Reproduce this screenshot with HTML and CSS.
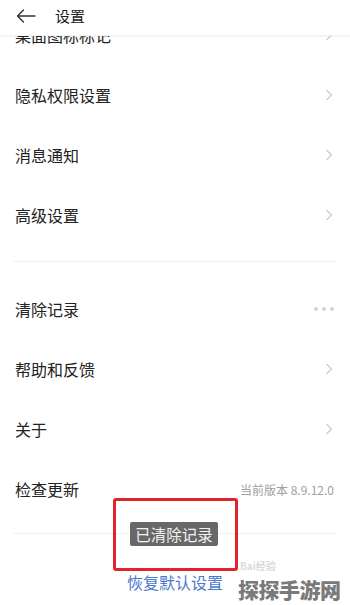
FILE: index.html
```html
<!DOCTYPE html>
<html lang="zh-CN">
<head>
<meta charset="utf-8">
<title>设置</title>
<link rel="stylesheet" href="styles.css">
</head>
<body>
<div class="screen">
  <header class="topbar">
    <svg class="back" width="20" height="14" viewBox="0 0 20 14"><path d="M19 7H1.5M7.5 1L1.5 7l6 6" fill="none" stroke="#333" stroke-width="1.4" stroke-linecap="round" stroke-linejoin="round"/></svg>
    <span class="title">设置</span>
  </header>
  <main class="content">
    <section class="group first">
      <div class="row"><span class="label">桌面图标标记</span><svg class="chev" width="8" height="12" viewBox="0 0 8 12"><path d="M1.5 1l5 5-5 5" fill="none" stroke="#c9c9c9" stroke-width="1.1"/></svg></div>
      <div class="row"><span class="label">隐私权限设置</span><svg class="chev" width="8" height="12" viewBox="0 0 8 12"><path d="M1.5 1l5 5-5 5" fill="none" stroke="#c9c9c9" stroke-width="1.1"/></svg></div>
      <div class="row"><span class="label">消息通知</span><svg class="chev" width="8" height="12" viewBox="0 0 8 12"><path d="M1.5 1l5 5-5 5" fill="none" stroke="#c9c9c9" stroke-width="1.1"/></svg></div>
      <div class="row"><span class="label">高级设置</span><svg class="chev" width="8" height="12" viewBox="0 0 8 12"><path d="M1.5 1l5 5-5 5" fill="none" stroke="#c9c9c9" stroke-width="1.1"/></svg></div>
    </section>
    <div class="divider"></div>
    <section class="group second">
      <div class="row"><span class="label">清除记录</span><span class="dots"><i></i><i></i><i></i></span></div>
      <div class="row"><span class="label">帮助和反馈</span><svg class="chev" width="8" height="12" viewBox="0 0 8 12"><path d="M1.5 1l5 5-5 5" fill="none" stroke="#c9c9c9" stroke-width="1.1"/></svg></div>
      <div class="row"><span class="label">关于</span><svg class="chev" width="8" height="12" viewBox="0 0 8 12"><path d="M1.5 1l5 5-5 5" fill="none" stroke="#c9c9c9" stroke-width="1.1"/></svg></div>
      <div class="row"><span class="label">检查更新</span><span class="version">当前版本 8.9.12.0</span></div>
    </section>
    <div class="divider"></div>
    <div class="reset">恢复默认设置</div>
  </main>
  <div class="toast">已清除记录</div>
  <div class="mark"></div>
  <div class="watermark"><span class="wm-small">Bai经验</span><span class="wm-big">探探手游网</span></div>
</div>
</body>
</html>
```
FILE: styles.css
```css
* { box-sizing: border-box; }
html, body { margin: 0; padding: 0; background: #fff; }
body {
  font-family: "Noto Sans CJK SC", "Noto Sans", sans-serif;
  color: #222;
}
.screen {
  position: relative;
  width: 350px;
  height: 605px;
  overflow: hidden;
  display: flex;
  flex-direction: column;
}
.topbar {
  position: relative;
  z-index: 2;
  height: 36px;
  flex: none;
  background: #fff;
  display: flex;
  align-items: center;
  padding-left: 16px;
  box-shadow: 0 1px 1px rgba(0,0,0,0.04);
  border-bottom: 1px solid #f4f4f4;
}
.back { display: block; margin-top: -4px; }
.title {
  margin-left: 19px;
  font-size: 15px;
  line-height: 16px;
  color: #222;
  margin-top: -4px;
}
.content {
  margin-top: -31px;
  display: flex;
  flex-direction: column;
}
.group.first { padding-bottom: 16px; }
.group.second { padding-top: 17px; padding-bottom: 14px; }
.row {
  height: 60px;
  display: flex;
  align-items: center;
  justify-content: space-between;
  padding: 0 17px 0 15px;
}
.label {
  font-size: 16px;
  line-height: 20px;
  color: #222;
}
.chev { display: block; }
.dots { display: flex; gap: 4px; margin-right: -1px; }
.dots i {
  display: block;
  width: 4px;
  height: 4px;
  border-radius: 50%;
  background: #d4d4d4;
}
.version {
  font-size: 12px;
  color: #a0a0a0;
  margin-right: -1px;
}
.divider {
  height: 1px;
  background: #f0f0f0;
  margin: 0 14px 0 13px;
}
.reset {
  margin-top: 38px;
  text-align: center;
  font-size: 16px;
  line-height: 20px;
  color: #4b78cf;
}
.toast {
  position: absolute;
  left: 130px;
  top: 522px;
  width: 88px;
  height: 24px;
  background: #686868;
  color: #f2f2f2;
  font-size: 15.5px;
  line-height: 24px;
  text-align: center;
  border-radius: 2px;
  white-space: nowrap;
}
.mark {
  position: absolute;
  left: 113px;
  top: 498px;
  width: 125px;
  height: 73px;
  border: 3px solid #e3222b;
  border-radius: 3px;
}
.watermark {
  position: absolute;
  left: 238px;
  top: 559px;
  width: 110px;
  display: flex;
  flex-direction: column;
  align-items: flex-start;
  gap: 4px;
}
.wm-small {
  font-size: 10px;
  line-height: 13px;
  color: rgba(180,180,180,0.5);
  font-weight: 700;
  margin-left: 2px;
}
.wm-big {
  font-size: 21px;
  line-height: 26px;
  font-weight: 900;
  color: #7a7a7a;
  letter-spacing: -0.5px;
}
```
